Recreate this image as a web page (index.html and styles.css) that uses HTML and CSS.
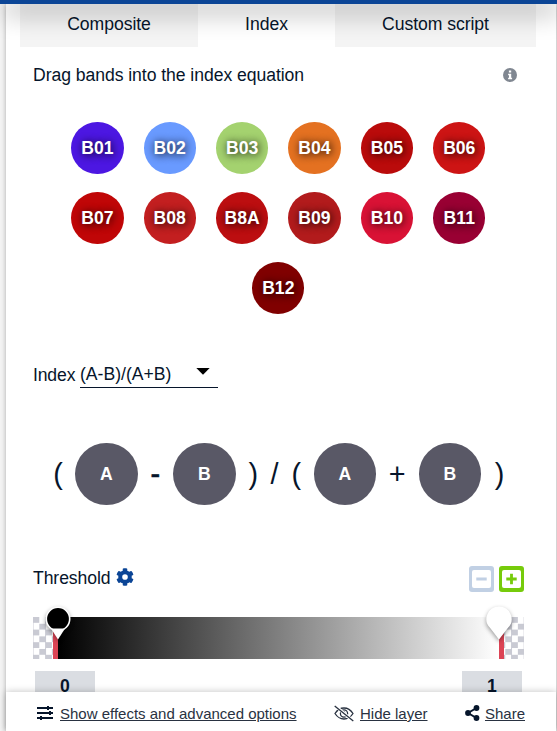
FILE: index.html
```html
<!DOCTYPE html>
<html lang="en">
<head>
<meta charset="utf-8">
<title>Index</title>
<link rel="stylesheet" href="styles.css">
</head>
<body>
<div class="topbar"></div>
<main class="panel">
  <nav class="tabs">
    <div class="tab first">Composite</div>
    <div class="tab active">Index</div>
    <div class="tab last">Custom script</div>
  </nav>
  <section class="intro">
    <span>Drag bands into the index equation</span>
    <svg class="info" viewBox="0 0 14 14"><circle cx="7" cy="7" r="7" fill="#808791"/><path d="M5.9 2.5h2.3v2H5.900zM5.100 5.700h3.100v4h.9v1.500H5.100V9.700h.9V7.200h-.9z" fill="#fff"/></svg>
  </section>
  <section class="bands">
    <div class="band b01">B01</div><div class="band b02">B02</div><div class="band b03">B03</div><div class="band b04">B04</div><div class="band b05">B05</div><div class="band b06">B06</div>
    <div class="band b07">B07</div><div class="band b08">B08</div><div class="band b8a">B8A</div><div class="band b09">B09</div><div class="band b10">B10</div><div class="band b11">B11</div>
    <div class="band b12">B12</div>
  </section>
  <section class="formula">
    <span>Index</span>
    <div class="select"><span>(A-B)/(A+B)</span><svg class="caret" viewBox="0 0 14 7"><path d="M0.300 0h13.400L7 6.800z" fill="#000"/></svg></div>
  </section>
  <section class="equation">
    <span>(</span><div class="slot">A</div><span class="minus-sign">-</span><div class="slot">B</div><span class="close">)</span><span>/</span><span class="open">(</span><div class="slot">A</div><span>+</span><div class="slot">B</div><span>)</span>
  </section>
  <section class="threshold">
    <span>Threshold</span>
    <svg class="gear" viewBox="0 0 512 512"><path fill="#0b4596" fill-rule="evenodd" d="M487 316l-42-25c4-23 4-47 0-70l42-25c5-3 7-9 6-14-11-36-30-68-55-94-4-4-10-5-15-3l-42 25c-18-15-39-27-61-35V26c0-5-4-10-9-12-36-8-73-8-110 0-5 2-9 7-9 12v49c-22 8-43 20-61 35L89 85c-5-2-11-1-15 3-25 26-44 58-55 94-1 5 1 11 6 14l42 25c-4 23-4 47 0 70l-42 25c-5 3-7 9-6 14 11 36 30 68 55 94 4 4 10 5 15 3l42-25c18 15 39 27 61 35v49c0 5 4 10 9 12 36 8 73 8 110 0 5-2 9-7 9-12v-49c22-8 43-20 61-35l42 25c5 2 11 1 15-3 25-26 44-58 55-94 1-5-1-11-6-14zM256 336a80 80 0 110-160 80 80 0 010 160z"/></svg>
    <div class="step minus"><svg viewBox="0 0 19 19"><path d="M4 9.500h11" stroke="#c1d0e4" stroke-width="3"/></svg></div>
    <div class="step plus"><svg viewBox="0 0 19 19"><path d="M4 9.500h11M9.500 4v11" stroke="#76cb0b" stroke-width="3"/></svg></div>
  </section>
  <section class="slider">
    <div class="gradient"></div>
    <svg class="pin low" viewBox="0 0 26 36"><circle cx="13" cy="13" r="11.700" fill="#000" stroke="#fff" stroke-width="1.600"/><path d="M6 22.500h14L13 33.500z" fill="#fff"/></svg>
    <svg class="pin high" viewBox="0 0 26 36"><path d="M13 .5a12.500 12.500 0 00-9 21.200L13 33.500l9-11.800A12.500 12.500 0 0013 .5z" fill="#fff"/></svg>
  </section>
  <section class="values">
    <div class="value">0</div>
    <div class="value">1</div>
  </section>
</main>
<footer class="actions">
  <svg class="sliders" viewBox="0 0 16 14"><path d="M0 2h16M0 7h16M0 12h16" stroke="#06152b" stroke-width="2"/><path d="M11 0v4M13 5v4M4 10v4" stroke="#06152b" stroke-width="2"/></svg>
  <a class="effects">Show effects and advanced options</a>
  <svg class="eye" viewBox="0 0 20 17"><g fill="none" stroke="#293241" stroke-width="1.300"><path d="M1 8.500Q4.500 3 10 3t9 5.500Q15.500 14 10 14T1 8.500z"/><circle cx="10" cy="8.500" r="3.600"/><path d="M9 7.500q1-1 2 0"/><path d="M1.500 1l17.500 15" stroke="#fff" stroke-width="3"/><path d="M.7 1l18.600 15"/></g></svg>
  <a class="hide">Hide layer</a>
  <svg class="share" viewBox="0 0 15 16"><path d="M11.500 3L3 8l8.500 5" fill="none" stroke="#06152b" stroke-width="2"/><g fill="#06152b"><circle cx="11.500" cy="3" r="2.900"/><circle cx="3" cy="8" r="2.900"/><circle cx="11.500" cy="13" r="2.900"/></g></svg>
  <a>Share</a>
</footer>
</body>
</html>
```
FILE: styles.css
```css
* { box-sizing: border-box; }
body {
  margin: 0;
  height: 731px;
  overflow: hidden;
  background: #f4f4f4;
  color: #06152b;
  font: 17.6px/20px "Liberation Sans", Arial, sans-serif;
}
svg { display: block; flex: none; }
.topbar {
  position: relative;
  z-index: 3;
  height: 4px;
  margin: 0 1px 0 6px;
  background: #0b4596;
  box-shadow: -6px 0 0 #0b4596, 1px 0 0 #0b4596, 0 5px 26px 3px rgba(0, 0, 0, .4);
}
.panel {
  width: 550px;
  height: 727px;
  margin-left: 6px;
  overflow: hidden;
  background: #fff;
  box-shadow: 0 0 5px rgba(0, 0, 0, .3);
}
.tabs { display: flex; height: 43px; margin: 0 20px 0 14px; }
.tab { width: 178px; padding-top: 10px; text-align: center; background: #f4f4f4; letter-spacing: -.05px; }
.tab.active { width: 137px; background: #fff; }
.tab.last { width: 201px; }
.intro { display: flex; justify-content: space-between; height: 60px; padding: 18px 39px 0 27px; letter-spacing: -.055px; }
.info { width: 14px; height: 14px; margin-top: 3px; }
.bands {
  display: flex;
  flex-wrap: wrap;
  justify-content: center;
  align-content: flex-start;
  gap: 18px 20px;
  height: 241px;
  padding: 15px 50px 0 44.600px;
}
.band {
  width: 52.4px;
  height: 52px;
  border-radius: 50%;
  color: #fff;
  font-weight: bold;
  line-height: 52px;
  text-align: center;
  text-shadow: 1px 1px 8px #000;
}
.b01 { background: #4c17e2; }
.b02 { background: #699aff; }
.b03 { background: #a4d26f; }
.b04 { background: #e47121; }
.b05 { background: #ba0b0b; }
.b06 { background: #cd1414; }
.b07 { background: #c00607; }
.b08 { background: #c31f20; }
.b8a { background: #bc0e10; }
.b09 { background: #b21b1c; }
.b10 { background: #d91235; }
.b11 { background: #990033; }
.b12 { background: #800000; }
.formula { display: flex; height: 79px; padding: 17px 0 0 27px; }
.formula > span { width: 47px; letter-spacing: -.15px; }
.select { display: flex; justify-content: space-between; width: 138px; height: 23px; padding-right: 8px; border-bottom: 1px solid #06152b; }
.select span { margin-top: -1px; }
.caret { width: 14px; height: 7px; margin-top: 3px; }
.equation {
  display: grid;
  grid-template-columns: 34px 62.5px 35.5px 62.5px 31.5px 15px 31.5px 62.5px 42.5px 62.5px 37px;
  align-items: center;
  height: 98px;
  padding: 0 0 5px 35px;
  font-size: 28.8px;
  line-height: 34px;
  text-align: center;
}
.minus-sign { -webkit-text-stroke: .6px #06152b; }
.close { padding-left: 4px; }
.open { padding-right: 3px; }
.slot {
  height: 62px;
  border-radius: 50%;
  background: #595866;
  color: #fff;
  font-size: 17.6px;
  font-weight: bold;
  line-height: 62px;
}
.threshold { display: flex; height: 68px; padding: 41px 32px 0 27px; line-height: 24px; letter-spacing: -.08px; }
.gear { width: 18px; height: 18px; margin: 2px 0 0 5px; }
.step { width: 25px; height: 26px; border-radius: 3px; padding: 4px 3px; }
.step svg { width: 19px; height: 18px; background: #fff; border-radius: 2px; }
.minus { margin-left: auto; background: #c1d0e4; }
.plus { margin-left: 5px; background: #76cb0b; }
.slider {
  position: relative;
  height: 42px;
  margin: 24px 32px 12px 27px;
  padding: 0 20px;
  background: repeating-conic-gradient(#c9cad3 0 25%, #fff 0 50%) 6.3px 0 / 12.6px 12.6px;
}
.gradient { height: 42px; border-left: 5px solid #dc4455; border-right: 5px solid #dc4455; background: linear-gradient(90deg, #000, #fff) padding-box; }
.pin { position: absolute; top: -11.5px; width: 26px; height: 36px; overflow: visible; filter: drop-shadow(0 2px 2px rgba(0, 0, 0, .4)); }
.low { left: 11.500px; }
.high { left: 452.500px; }
.values { display: flex; justify-content: space-between; padding: 0 34px 0 29px; }
.value { width: 60px; height: 32px; background: #dadde2; font-weight: bold; line-height: 30px; text-align: center; }
.actions {
  position: absolute;
  top: 692px;
  left: 6px;
  display: flex;
  align-items: flex-start;
  width: 550px;
  height: 39px;
  padding: 12px 31px 0;
  background: #fff;
  box-shadow: 0 0 7px rgba(0, 0, 0, .25);
  font-size: 15px;
}
.actions a { text-decoration: underline; white-space: nowrap; color: #293241; }
.sliders { width: 16px; height: 14px; margin: 2px 7px 0 0; }
.effects { width: 274px; }
.eye { width: 20px; height: 17px; margin: 1px 6px 0 0; }
.hide { width: 105px; }
.share { width: 15px; height: 16px; margin: 1px 5px 0 0; }
```
